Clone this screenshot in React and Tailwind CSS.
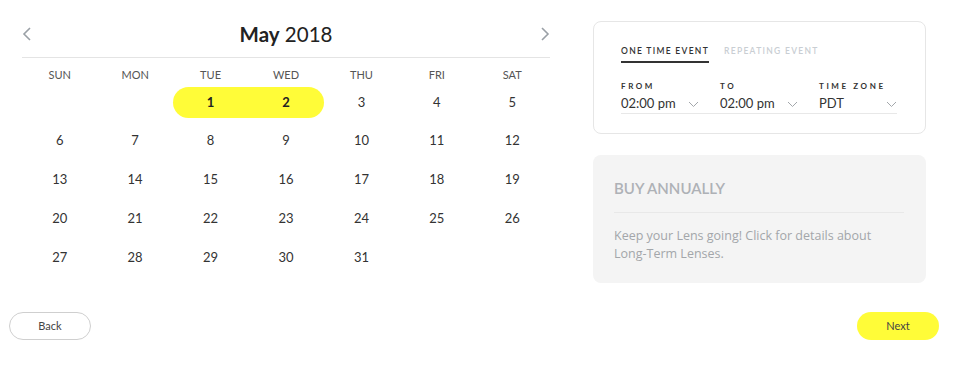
import React from "react";

const days = ["SUN", "MON", "TUE", "WED", "THU", "FRI", "SAT"];

// May 2018 starts on a Tuesday
const cells = [null, null, ...Array.from({ length: 31 }, (_, i) => i + 1)];
const selected = [1, 2];

function Chevron({ dir = "left" }) {
  return (
    <svg width="10" height="16" viewBox="0 0 10 16" fill="none">
      {dir === "left" ? (
        <path d="M8 2 L2 8 L8 14" stroke="#9aa0a6" strokeWidth="1.6" />
      ) : (
        <path d="M2 2 L8 8 L2 14" stroke="#9aa0a6" strokeWidth="1.6" />
      )}
    </svg>
  );
}

function Caret() {
  return (
    <svg width="11" height="7" viewBox="0 0 11 7" fill="none">
      <path d="M1 1 L5.5 5.5 L10 1" stroke="#a3a7ab" strokeWidth="1" />
    </svg>
  );
}

function Calendar() {
  const rows = [];
  for (let i = 0; i < cells.length; i += 7) rows.push(cells.slice(i, i + 7));

  return (
    <div className="ml-[22px] w-[528px] pt-[16px]">
      <div className="flex h-[42px] items-center justify-between border-b border-[#e4e4e4] pb-[5px]">
        <button>
          <Chevron dir="left" />
        </button>
        <div className="text-[20.5px] text-[#222]">
          <span className="font-bold">May</span> 2018
        </div>
        <button>
          <Chevron dir="right" />
        </button>
      </div>
      <div className="grid h-[29px] grid-cols-7 items-center pt-[6px]">
        {days.map((d) => (
          <div key={d} className="text-center text-[11px] text-[#555]">
            {d}
          </div>
        ))}
      </div>
      <div className="flex flex-col gap-y-[7.7px]">
        {rows.map((row, r) => (
          <div key={r} className="grid h-[31px] grid-cols-7">
            {row.map((n, c) => {
              const sel = selected.includes(n);
              const first = sel && n === selected[0];
              const last = sel && n === selected[selected.length - 1];
              return (
                <div
                  key={c}
                  className={
                    "flex items-center justify-center text-[13px] " +
                    (sel ? "bg-[#fffc38] font-bold text-[#222] " : "text-[#333] ") +
                    (first ? "rounded-l-full " : "") +
                    (last ? "rounded-r-full" : "")
                  }
                >
                  {n}
                </div>
              );
            })}
          </div>
        ))}
      </div>
    </div>
  );
}

function TimeField({ label, value }) {
  return (
    <div className="w-[78px]">
      <div className="text-[8px] leading-[12px] font-bold tracking-[2.6px] text-[#333]">{label}</div>
      <div className="mt-[3px] flex h-[18px] items-center justify-between">
        <span className="text-[13px] text-[#333]">{value}</span>
        <Caret />
      </div>
    </div>
  );
}

function Sidebar() {
  return (
    <div className="ml-[43px] w-[333px] pt-[21px]">
      <div className="h-[113px] rounded-[8px] border border-[#e6e6e6] pl-[27px] pt-[23px]">
        <div className="flex gap-[15px] text-[8.5px] leading-[12px] font-semibold tracking-[1.3px]">
          <div className="border-b-2 border-[#333] pb-[4px] text-[#333]">ONE TIME EVENT</div>
          <div className="pb-[4px] text-[#c9ced3]">REPEATING EVENT</div>
        </div>
        <div className="mt-[17px] flex w-[276px] gap-[21px] border-b border-[#e8e8e8]">
          <TimeField label="FROM" value="02:00 pm" />
          <TimeField label="TO" value="02:00 pm" />
          <TimeField label="TIME ZONE" value="PDT" />
        </div>
      </div>
      <div className="mt-[21px] h-[128px] rounded-[8px] bg-[#f4f4f4] pl-[21px] pr-[22px] pt-[22px]">
        <div className="border-b border-[#e8e8e8] pb-[12px] text-[15px] font-semibold text-[#aeb1b6]">
          BUY ANNUALLY
        </div>
        <p className="w-[280px] pt-[14px] font-['Open_Sans',sans-serif] text-[12.5px] leading-[18px] text-[#a3a6aa]">
          Keep your Lens going! Click for details about Long-Term Lenses.
        </p>
      </div>
    </div>
  );
}

export default function App() {
  return (
    <div className="h-[366px] w-[955px] bg-white font-['Lato',sans-serif]">
      <div className="flex h-[312px]">
        <Calendar />
        <Sidebar />
      </div>
      <div className="flex justify-between pl-[9px] pr-[16px]">
        <button className="h-[28px] w-[82px] rounded-full border border-[#cfcfcf] text-[11px] text-[#444]">
          Back
        </button>
        <button className="h-[28px] w-[82px] rounded-full bg-[#fffc38] text-[11px] text-[#444]">
          Next
        </button>
      </div>
    </div>
  );
}
